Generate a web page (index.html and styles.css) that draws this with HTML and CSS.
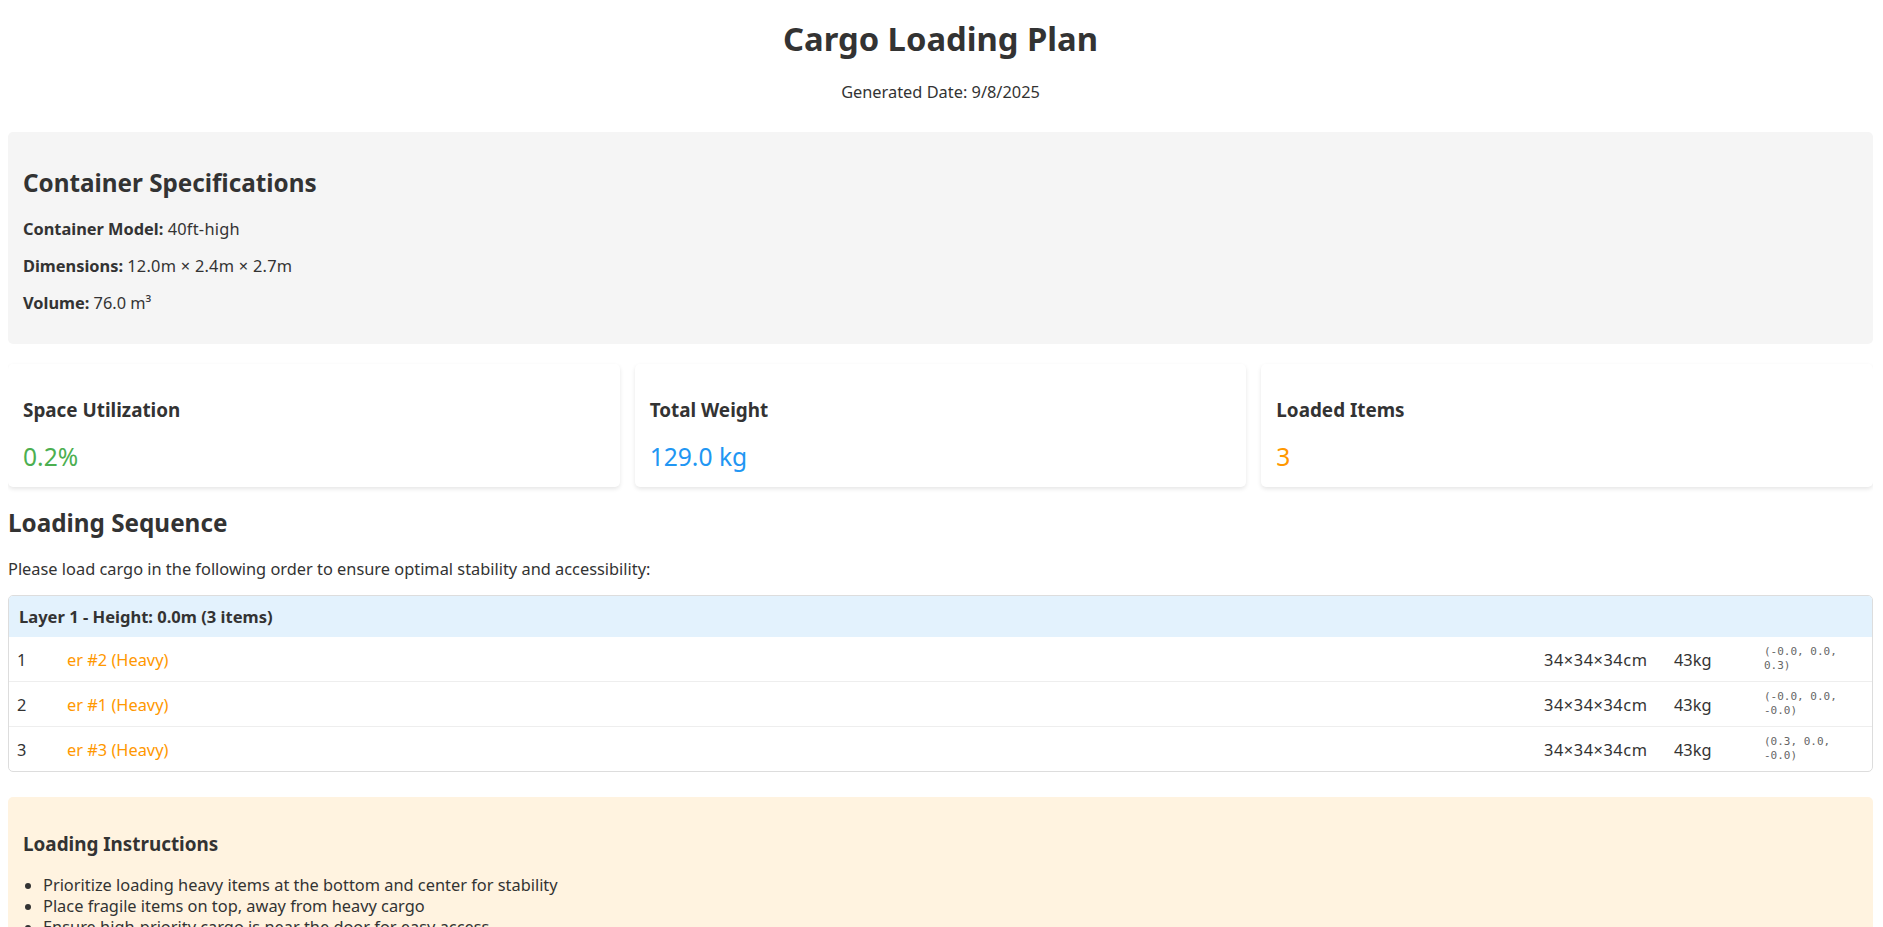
FILE: index.html
```html
<!DOCTYPE html>
<html lang="en">
<head>
<meta charset="utf-8">
<title>Cargo Loading Plan</title>
<link rel="stylesheet" href="styles.css">
</head>
<body>
<header class="header">
  <h1>Cargo Loading Plan</h1>
  <p>Generated Date: 9/8/2025</p>
</header>
<section class="specs">
  <h2>Container Specifications</h2>
  <p><strong>Container Model:</strong> <span class="spaced">40ft-high</span></p>
  <p><strong>Dimensions:</strong> <span class="spaced">12.0m × 2.4m × 2.7m</span></p>
  <p><strong>Volume:</strong> 76.0 m³</p>
</section>
<section class="stats">
  <div class="card"><h3>Space Utilization</h3><div class="value green">0.2%</div></div>
  <div class="card"><h3>Total Weight</h3><div class="value blue">129.0 kg</div></div>
  <div class="card"><h3>Loaded Items</h3><div class="value orange">3</div></div>
</section>
<h2>Loading Sequence</h2>
<p class="intro">Please load cargo in the following order to ensure optimal stability and accessibility:</p>
<section class="layer">
  <div class="layer-head">Layer 1 - Height: 0.0m (3 items)</div>
  <div class="row"><span class="cell">1</span><span class="cell name">er #2 (Heavy)</span><span class="cell dims">34×34×34cm</span><span class="cell">43kg</span><span class="pos">(-0.0, 0.0, 0.3)</span></div>
  <div class="row"><span class="cell">2</span><span class="cell name">er #1 (Heavy)</span><span class="cell dims">34×34×34cm</span><span class="cell">43kg</span><span class="pos">(-0.0, 0.0, -0.0)</span></div>
  <div class="row"><span class="cell">3</span><span class="cell name">er #3 (Heavy)</span><span class="cell dims">34×34×34cm</span><span class="cell">43kg</span><span class="pos">(0.3, 0.0, -0.0)</span></div>
</section>
<section class="notes">
  <h3>Loading Instructions</h3>
  <ul>
    <li>Prioritize loading heavy items at the bottom and center for stability</li>
    <li>Place fragile items on top, away from heavy cargo</li>
    <li>Ensure high-priority cargo is near the door for easy access</li>
  </ul>
</section>
</body>
</html>
```
FILE: styles.css
```css
html { overflow: hidden; }
body {
  margin: 0 10px 0 8px;
  font-family: "Noto Sans", sans-serif;
  font-size: 16.36px;
  line-height: 21px;
  color: #333;
  background: #fff;
}
h1 { font-size: 32.75px; line-height: 42px; margin: 0; padding-top: 18px; font-weight: 700; }
h2 { font-size: 24.25px; line-height: 31px; margin: 19.92px 0; font-weight: 700; }
h3 { font-size: 18.87px; line-height: 25px; margin: 18.72px 0; font-weight: 700; }
p { margin: 16px 0; }
.header { text-align: center; margin-bottom: 29px; }
.header p { margin: 22px 0 0; }
.specs { background: #f5f5f5; border-radius: 5px; padding: 15px; overflow: hidden; }
.specs p { line-height: 23px; margin: 14px 0; }
.spaced { letter-spacing: .25px; }
.intro { line-height: 23px; margin: 14px 0; }
.stats { display: grid; grid-template-columns: repeat(3, 1fr); gap: 15px; margin-top: 20px; }
.card { background: #fff; border-radius: 5px; padding: 15px; box-shadow: 0 2px 4px rgba(0,0,0,.1); overflow: hidden; }
.value { font-size: 24.6px; line-height: 31px; }
.green { color: #4caf50; }
.blue { color: #2196f3; }
.orange { color: #ff9800; }
.layer { border: 1px solid #ddd; border-radius: 5px; overflow: hidden; margin-bottom: 25px; }
.layer-head { background: #e3f2fd; padding: 10px; font-weight: 700; font-size: 16.55px; }
.row {
  display: grid;
  grid-template-columns: 50px 1fr 130px 90px 100px;
  align-items: center;
  padding: 8px;
  border-top: 1px solid #eee;
}
.layer-head + .row { border-top: 0; }
.cell { padding-top: 2px; }
.name { color: #ff9800; }
.dims { letter-spacing: .55px; }
.pos { font-family: "DejaVu Sans Mono", monospace; font-size: 11px; line-height: 14px; color: #666; }
.notes { background: #fff3e0; border-radius: 5px; padding: 15px; overflow: hidden; }
.notes h3 { line-height: 27px; margin-bottom: 16.72px; }
.notes ul { margin: 0; padding-left: 20px; }
```
